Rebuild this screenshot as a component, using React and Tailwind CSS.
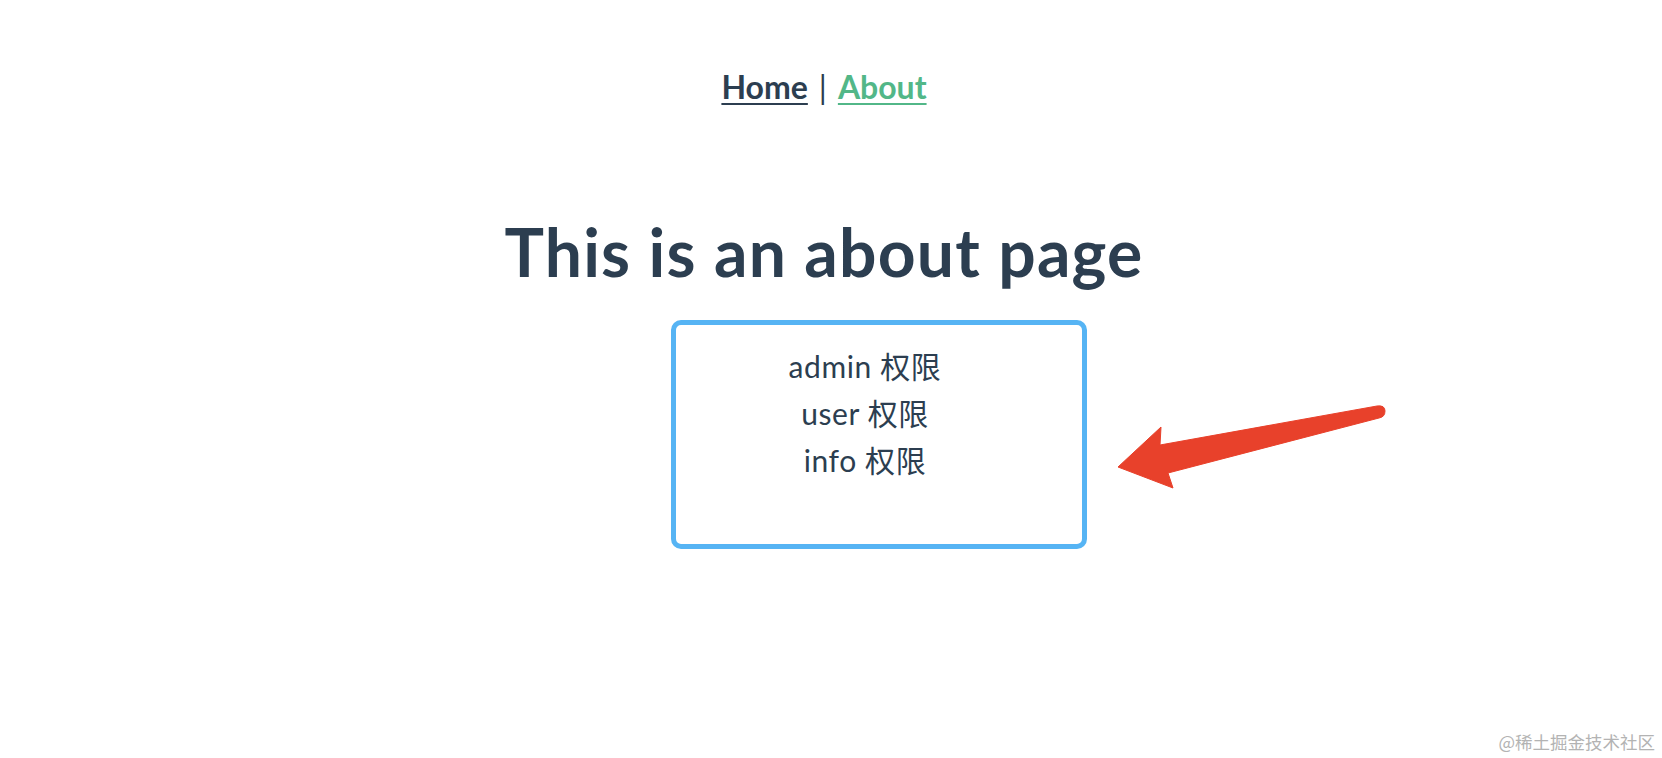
import React from 'react';

const perms = ['admin', 'user', 'info'];

function Arrow() {
  return (
    <svg className="absolute left-[1100px] top-[395px]" width="300" height="105" viewBox="1100 395 300 105">
      <path
        d="M1118 467 L1161 427 L1160 445 L1377 406 Q1385 405 1385 411 Q1385 417 1379 418 L1168 473 L1173 488 Z"
        fill="#e8412b"
        stroke="#e8412b"
        strokeWidth="1"
        strokeLinejoin="round"
      />
    </svg>
  );
}

export default function App() {
  return (
    <div className="relative w-[1662px] h-[758px] overflow-hidden bg-white text-[#2c3e50] font-[Lato,'Noto_Sans_CJK_SC',sans-serif]">
      <nav className="w-[1648px] pt-[68px] flex justify-center items-baseline gap-[11px] text-[32px] leading-[38px] font-bold">
        <a className="underline decoration-2 underline-offset-[4px] text-[#2c3e50]">Home</a>
        <span className="font-normal">|</span>
        <a className="underline decoration-2 underline-offset-[4px] text-[#52b788]">About</a>
      </nav>

      <h1 className="w-[1648px] mt-[106px] text-center text-[66px] leading-[80px] tracking-[1.2px] font-bold">
        This is an about page
      </h1>

      <div className="ml-[671px] mt-[28px] w-[416px] h-[229px] rounded-[10px] border-[5px] border-[#56b4f4] pt-[18px] pr-[28px] text-center text-[30px] leading-[47px] tracking-[0.6px]">
        {perms.map((p) => (
          <div key={p}>{p} 权限</div>
        ))}
      </div>

      <Arrow />

      <div className="absolute right-[7px] bottom-[4px] text-[17.5px] leading-[24px] text-[#b3b3b3] font-['Noto_Sans_CJK_SC',sans-serif]">
        @稀土掘金技术社区
      </div>
    </div>
  );
}
